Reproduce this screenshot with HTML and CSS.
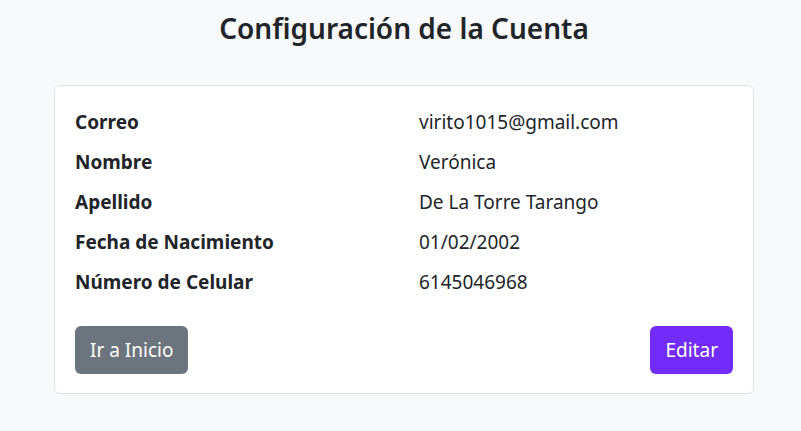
FILE: index.html
```html
<!DOCTYPE html>
<html lang="es">
<head>
<meta charset="utf-8">
<title>Configuración de la Cuenta</title>
<link rel="stylesheet" href="styles.css">
</head>
<body>
<main class="page">
  <h1 class="title">Configuración de la Cuenta</h1>
  <section class="card">
    <dl class="info">
      <dt>Correo</dt><dd>virito1015@gmail.com</dd>
      <dt>Nombre</dt><dd>Verónica</dd>
      <dt>Apellido</dt><dd>De La Torre Tarango</dd>
      <dt>Fecha de Nacimiento</dt><dd>01/02/2002</dd>
      <dt>Número de Celular</dt><dd>6145046968</dd>
    </dl>
    <div class="actions">
      <button class="btn btn-secondary">Ir a Inicio</button>
      <button class="btn btn-purple">Editar</button>
    </div>
  </section>
</main>
</body>
</html>
```

FILE: styles.css
```css
* { box-sizing: border-box; }
html, body { margin: 0; padding: 0; }
body {
  background: #f8f9fa;
  color: #212529;
  font-family: "Noto Sans", "Open Sans", sans-serif;
  font-size: 19px;
}
.page {
  width: 700px;
  margin: 0 0 0 54px;
  padding-top: 8px;
  display: flex;
  flex-direction: column;
  align-items: stretch;
}
.title {
  margin: 0 0 37px;
  text-align: center;
  font-size: 28px;
  font-weight: 600;
  line-height: 40px;
}
.card {
  background: #fff;
  border: 1px solid #dee2e6;
  border-radius: 6px;
  padding: 23px 20px 19px;
}
.info {
  margin: 0;
  display: grid;
  grid-template-columns: 344px 1fr;
  row-gap: 13px;
  line-height: 27px;
}
.info dt { font-weight: 700; }
.info dd { margin: 0; }
.actions {
  margin-top: 30px;
  display: flex;
  justify-content: space-between;
}
.btn {
  font-family: inherit;
  font-size: 19px;
  line-height: 28px;
  padding: 10px 15px;
  border: none;
  border-radius: 6px;
  color: #fff;
}
.btn-secondary { background: #6c757d; }
.btn-purple { background: #712cf9; }
```
